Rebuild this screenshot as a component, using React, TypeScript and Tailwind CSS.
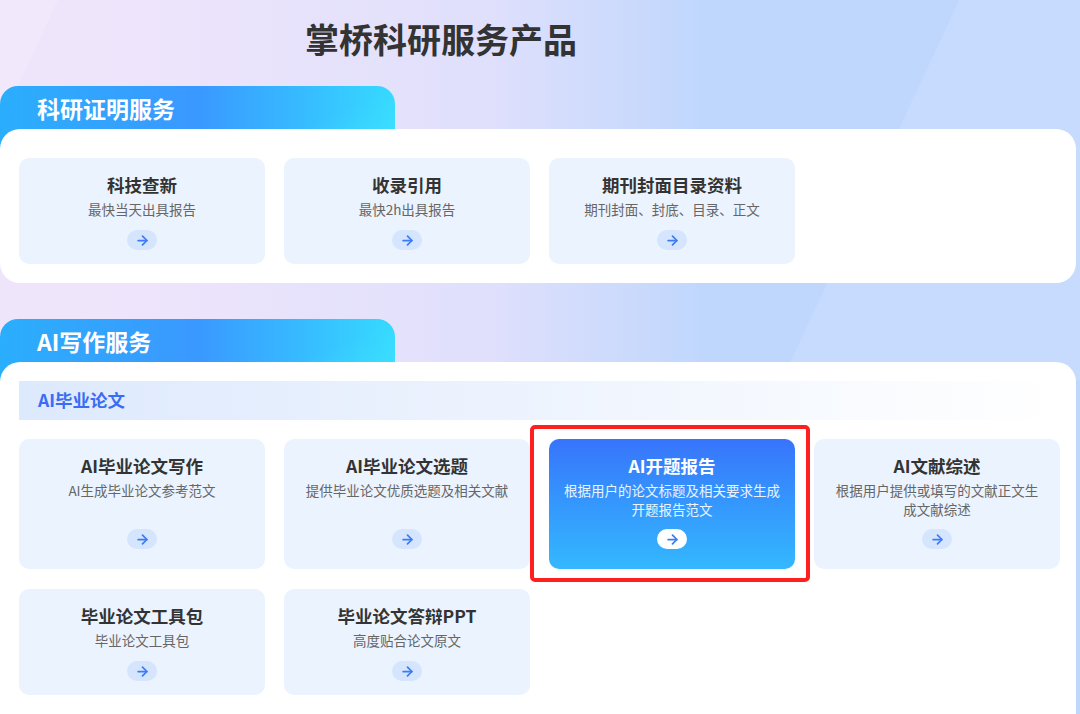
import { ArrowRight } from "lucide-react";

type Item = { title: string; desc: string; active?: boolean };

const proofItems: Item[] = [
  { title: "科技查新", desc: "最快当天出具报告" },
  { title: "收录引用", desc: "最快2h出具报告" },
  { title: "期刊封面目录资料", desc: "期刊封面、封底、目录、正文" },
];

const aiRow1: Item[] = [
  { title: "AI毕业论文写作", desc: "AI生成毕业论文参考范文" },
  { title: "AI毕业论文选题", desc: "提供毕业论文优质选题及相关文献" },
  { title: "AI开题报告", desc: "根据用户的论文标题及相关要求生成\n开题报告范文", active: true },
  { title: "AI文献综述", desc: "根据用户提供或填写的文献正文生\n成文献综述" },
];

const aiRow2: Item[] = [
  { title: "毕业论文工具包", desc: "毕业论文工具包" },
  { title: "毕业论文答辩PPT", desc: "高度贴合论文原文" },
];

const font = { fontFamily: "'Noto Sans CJK SC', 'Noto Sans', sans-serif" };

function Card({ item, tall }: { item: Item; tall?: boolean }) {
  const active = item.active;
  return (
    <div className="relative">
      <div
        className={`flex flex-col items-center rounded-[10px] px-[8px] pt-[16px] text-center ${
          tall ? "h-[130px] pb-[20px]" : "h-[106px] pb-[14px]"
        } ${active ? "bg-gradient-to-b from-[#3874fb] to-[#34b8fe]" : "bg-[#ebf3fe]"}`}
      >
        <div className={`text-[17.5px] font-bold leading-[22px] ${active ? "text-white" : "text-[#333333]"}`}>
          {item.title}
        </div>
        <div
          className={`mt-[4px] whitespace-pre-line text-[13.5px] leading-[19px] ${
            active ? "text-white/90" : "text-[#666666]"
          }`}
        >
          {item.desc}
        </div>
        <div
          className={`mt-auto flex h-[20px] w-[30px] items-center justify-center rounded-full ${
            active ? "bg-white" : "bg-[#d5e5fe]"
          }`}
        >
          <ArrowRight size={15} strokeWidth={2.8} className="text-[#3b7cf6]" />
        </div>
      </div>
      {active && (
        <div className="pointer-events-none absolute -top-[14px] -bottom-[13px] -left-[19px] -right-[15px] rounded-[5px] border-[4px] border-[#ff1f1f]" />
      )}
    </div>
  );
}

function Tab({ label }: { label: string }) {
  return (
    <div className="relative h-[63px] w-[395px] overflow-hidden rounded-t-[18px] bg-gradient-to-r from-[#2aaefc] via-[#3a98ff] to-[#36dafe] pl-[37px] pt-[7px]">
      <div className="absolute right-0 top-0 h-full w-[140px] bg-gradient-to-br from-transparent via-transparent to-[#40e4ff]/60" />
      <span className="relative text-[23px] font-bold leading-[30px] text-white">{label}</span>
    </div>
  );
}

export default function App() {
  return (
    <div
      className="relative h-[714px] w-[1080px] overflow-hidden bg-gradient-to-r from-[#efe5fb] from-10% via-[#e0e0fc] via-45% to-[#c0d7fd] to-65%"
      style={font}
    >
      {/* faint light streaks */}
      <div className="pointer-events-none absolute -top-[40px] left-[880px] h-[420px] w-[320px] -skew-x-[25deg] bg-white/10" />
      <div className="pointer-events-none absolute -top-[40px] -left-[60px] h-[200px] w-[90px] -skew-x-[25deg] bg-white/15" />

      <div className="relative">
        <h1 className="pl-[305px] pt-[16px] text-[34px] font-bold leading-[46px] text-[#333333]">掌桥科研服务产品</h1>

        {/* 科研证明服务 */}
        <div className="mt-[24px]">
          <Tab label="科研证明服务" />
          <div className="relative -mt-[20px] w-[1076px] rounded-[20px] bg-white px-[19px] pb-[19px] pt-[29px]">
            <div className="grid grid-cols-[repeat(4,246px)] gap-[19px]">
              {proofItems.map((it) => (
                <Card key={it.title} item={it} />
              ))}
            </div>
          </div>
        </div>

        {/* AI写作服务 */}
        <div className="mt-[36px]">
          <Tab label="AI写作服务" />
          <div className="relative -mt-[20px] w-[1076px] rounded-t-[20px] bg-white px-[19px] pb-[20px] pt-[19px]">
            <div className="flex h-[39px] w-[1041px] items-center bg-gradient-to-r from-[#dde9fd] via-[#eef4fe] to-white pl-[19px]">
              <span className="text-[17.5px] font-bold text-[#3a6cf4]">AI毕业论文</span>
            </div>
            <div className="mt-[19px] grid grid-cols-[repeat(4,246px)] gap-[19px]">
              {aiRow1.map((it) => (
                <Card key={it.title} item={it} tall />
              ))}
            </div>
            <div className="mt-[20px] grid grid-cols-[repeat(4,246px)] gap-[19px]">
              {aiRow2.map((it) => (
                <Card key={it.title} item={it} />
              ))}
            </div>
          </div>
        </div>
      </div>
    </div>
  );
}
